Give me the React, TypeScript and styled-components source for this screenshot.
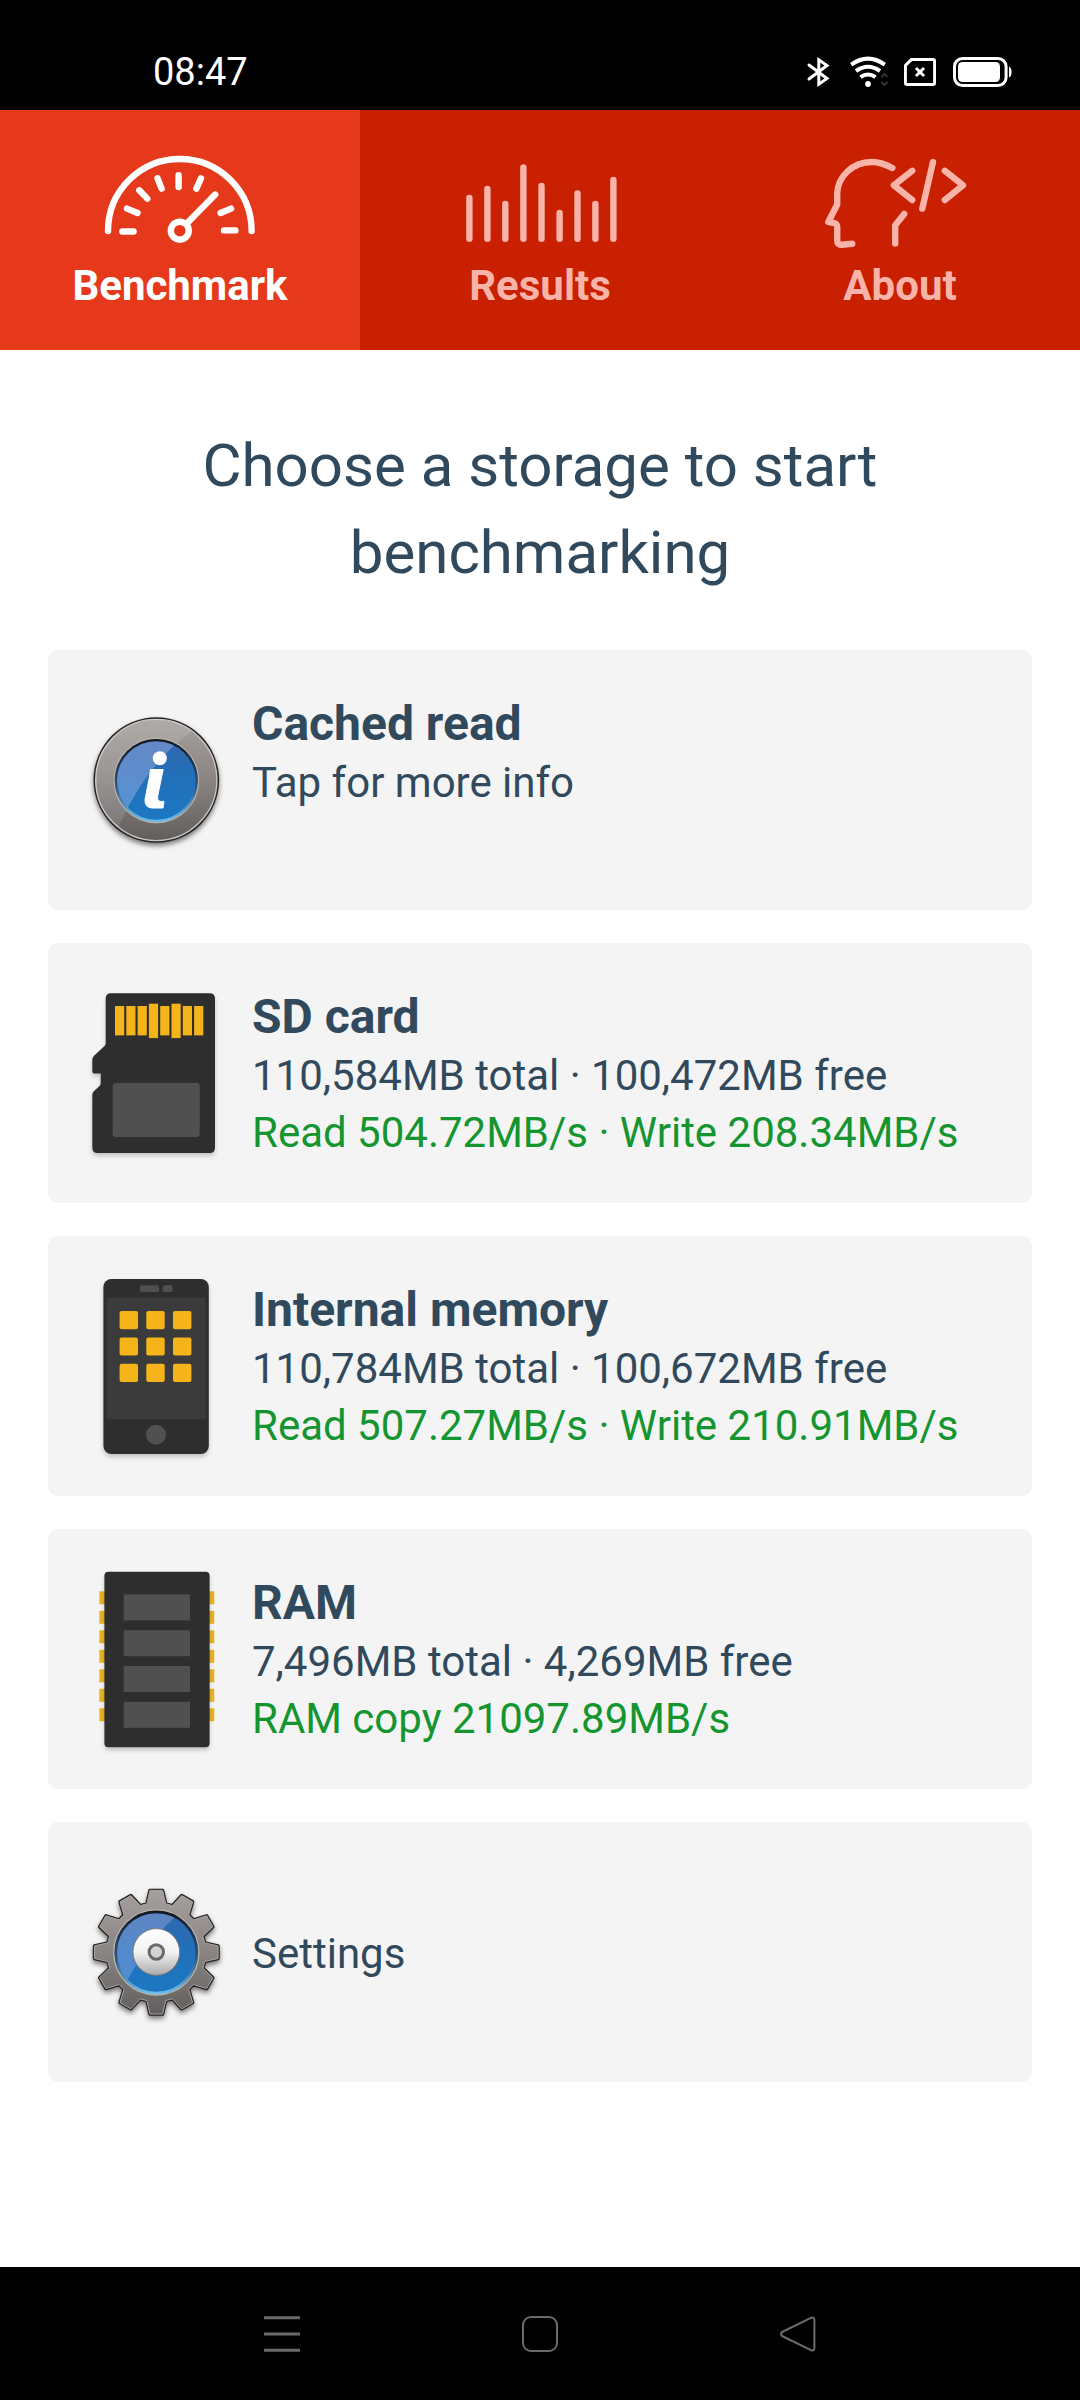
import React, { useState } from "react";
import styled, { createGlobalStyle } from "styled-components";

const GlobalStyle = createGlobalStyle`
  * { box-sizing: border-box; }
  body { margin: 0; background: #fff; font-family: Roboto, "Noto Sans", sans-serif; }
  button { border: 0; margin: 0; padding: 0; font: inherit; cursor: pointer; }
  svg { display: block; flex: none; }
`;

const Screen = styled.div`
  display: flex;
  flex-direction: column;
  min-height: 100vh;
  background: #fff;
  color: #31495c;
`;

const StatusBar = styled.header`
  display: flex;
  align-items: flex-end;
  justify-content: space-between;
  height: 110px;
  padding: 0 68px 16px 153px;
  background: #000;
  color: #fff;
`;

const Clock = styled.time`
  font-size: 38px;
  line-height: 44px;
`;

const StatusIcons = styled.div`
  display: flex;
  align-items: center;
  gap: 16px;
  height: 44px;
`;

const Tabs = styled.nav`
  display: grid;
  grid-template-columns: repeat(3, 1fr);
  background: #c82000;
`;

const Tab = styled.button<{ $active: boolean }>`
  display: flex;
  flex-direction: column;
  align-items: center;
  gap: 10px;
  height: 240px;
  padding-top: 40px;
  background: ${(p) => (p.$active ? "#e6391b" : "transparent")};
  color: ${(p) => (p.$active ? "#fff" : "#f8b4a8")};
`;

const TabLabel = styled.span`
  font-size: 42px;
  font-weight: 700;
  line-height: 52px;
`;

const Main = styled.main`
  flex: 1;
  padding: 72px 48px;
`;

const Heading = styled.h1`
  margin: 0 0 54px;
  font-size: 60px;
  font-weight: 400;
  line-height: 87px;
  text-align: center;
`;

const CardList = styled.div`
  display: flex;
  flex-direction: column;
  gap: 33px;
`;

const Card = styled.button`
  display: flex;
  align-items: center;
  gap: 24px;
  min-height: 260px;
  padding: 30px 36px;
  border-radius: 10px;
  background: #f4f4f4;
  color: inherit;
  text-align: left;
`;

const CardText = styled.span`
  display: flex;
  flex-direction: column;
  flex: 1;
  padding-top: 2px;
`;

const CardTitle = styled.strong`
  font-size: 48px;
  font-weight: 700;
  line-height: 60px;
`;

const CardLine = styled.span<{ $result?: boolean }>`
  min-height: 57px;
  font-size: 42px;
  line-height: 57px;
  color: ${(p) => (p.$result ? "#149530" : "inherit")};
`;

const NavBar = styled.footer`
  display: flex;
  align-items: center;
  justify-content: center;
  gap: 218px;
  height: 133px;
  background: #000;
`;

const NavButton = styled.button`
  display: grid;
  place-items: center;
  width: 40px;
  height: 40px;
  background: transparent;
  color: #6b6b6b;
`;

const BluetoothIcon = () => (
  <svg width="28" height="32" viewBox="0 0 28 32" fill="none" stroke="#fff" strokeWidth="3" strokeLinejoin="miter" strokeLinecap="round">
    <path d="M3 9 L21 22.5 L12.8 28.2 V3.8 L21 9.5 L3 23" />
  </svg>
);

const WifiIcon = () => (
  <svg width="38" height="32" viewBox="0 0 38 32" fill="none" stroke="#fff" strokeWidth="4">
    <path d="M1.2 8.6 Q18 -3.4 34.8 8.6" />
    <path d="M6 15 Q18 6.5 30 15" />
    <path d="M10.5 21.2 Q18 15.8 25.5 21.2" />
    <circle cx="18" cy="28" r="2.9" fill="#fff" stroke="none" />
    <path d="M31.5 21 L34.5 18 L37.5 21 M31.5 26 L34.5 29 L37.5 26" stroke="#333" strokeWidth="2" />
  </svg>
);

const SimIcon = () => (
  <svg width="32" height="32" viewBox="0 0 32 32" fill="none" stroke="#fff" strokeWidth="3" strokeLinejoin="round">
    <path d="M7.5 3.4 H29 Q30.6 3.4 30.6 5 V27 Q30.6 28.6 29 28.6 H3 Q1.4 28.6 1.4 27 V9.5 Z" />
    <path d="M12 12 L20 20 M20 12 L12 20" />
  </svg>
);

const BatteryIcon = () => (
  <svg width="60" height="32" viewBox="0 0 60 32">
    <rect x="2.5" y="2.5" width="51.6" height="27" rx="8" fill="none" stroke="#fff" strokeWidth="3" />
    <rect x="6" y="6" width="42" height="20" rx="4.5" fill="#fff" />
    <path d="M57 10.5 Q59.6 11.5 59.6 16 Q59.6 20.5 57 21.5 Z" fill="#fff" />
  </svg>
);

const tabStroke = {
  width: 160,
  height: 100,
  fill: "none",
  stroke: "currentColor",
  strokeWidth: 6.4,
  strokeLinecap: "round" as const,
  strokeLinejoin: "round" as const,
};

const GaugeIcon = () => (
  <svg {...tabStroke} viewBox="100 150 160 100">
    <path d="M108 231 A71.8 72 0 0 1 251.6 231" />
    <path d="M122.4 231.5 H133.6 M127 208.6 L137.5 213 M139.3 190.3 L147.3 198.6 M157.5 178.3 L161.6 188.6 M178.6 175.2 V187 M201 178.3 L196.4 188.6 M220.6 213 L231 208.6 M224 230.4 H235.4" />
    <path d="M215.2 194.6 L187 223.2" />
    <circle cx="179.8" cy="230.7" r="9" />
  </svg>
);

const BarsIcon = () => (
  <svg {...tabStroke} viewBox="460 150 160 100">
    <path d="M469.4 198 V238.8 M487.4 189 V238.8 M505.3 204 V238.8 M523.4 167.5 V238.8 M541.5 186 V238.8 M559.6 213 V238.8 M577.5 193.5 V238.8 M595.4 204 V238.8 M613.4 180 V238.8" />
  </svg>
);

const CoderIcon = () => (
  <svg {...tabStroke} viewBox="820 150 160 100">
    <path d="M892.3 168 C884 163.5 878 162 872 162 C852 162 838 177 837.2 193 V204.5 L828.3 222 C831 223 837.2 221.5 837.2 227 V240.5 Q837.2 245 841.5 244.8 L852.2 243.8" />
    <path d="M904.2 214 L895.2 225.3 V243.6" />
    <path d="M912.2 170.8 L893.8 185.3 L912.2 200" />
    <path d="M933 162 L922.3 208.6" />
    <path d="M944.8 170.8 L963 185.3 L944.8 200" />
  </svg>
);

const Gradients = ({ id }: { id: string }) => (
  <defs>
    <linearGradient id={`${id}-steel`} x1="0" y1="0" x2="0" y2="1">
      <stop offset="0" stopColor="#a5a09e" />
      <stop offset="0.5" stopColor="#8a8583" />
      <stop offset="1" stopColor="#605e5d" />
    </linearGradient>
    <linearGradient id={`${id}-blue`} x1="0" y1="0" x2="0" y2="1">
      <stop offset="0" stopColor="#3267ad" />
      <stop offset="0.45" stopColor="#2270b9" />
      <stop offset="1" stopColor="#1c78c3" />
    </linearGradient>
    <linearGradient id={`${id}-rim`} x1="0" y1="0" x2="0" y2="1">
      <stop offset="0" stopColor="#101822" />
      <stop offset="0.55" stopColor="#2c527f" />
      <stop offset="1" stopColor="#6fbdec" />
    </linearGradient>
    <linearGradient id={`${id}-silver`} x1="0" y1="0" x2="0" y2="1">
      <stop offset="0" stopColor="#ffffff" />
      <stop offset="0.5" stopColor="#f2f2f2" />
      <stop offset="1" stopColor="#a9a9a9" />
    </linearGradient>
    <filter id={`${id}-shadow`} x="-20%" y="-20%" width="140%" height="140%">
      <feDropShadow dx="0" dy="3" stdDeviation="2.5" floodColor="#000" floodOpacity="0.5" />
    </filter>
    <clipPath id={`${id}-disc`}>
      <circle cx="72.3" cy="100" r="61" />
    </clipPath>
    <clipPath id={`${id}-lens`}>
      <circle cx="72.3" cy="100.5" r="41" />
    </clipPath>
  </defs>
);

const GLOSS = "M107 52 Q62 84 34 148 L0 148 V0 H107 Z";

const InfoIcon = () => (
  <svg width="144" height="200" viewBox="0 0 144 200">
    <Gradients id="info" />
    <circle cx="72.3" cy="100" r="62.8" fill="#262423" filter="url(#info-shadow)" />
    <circle cx="72.3" cy="100" r="60.6" fill="url(#info-steel)" stroke="#c9c5c2" strokeWidth="1.4" />
    <path d={GLOSS} fill="#fff" opacity="0.12" clipPath="url(#info-disc)" />
    <circle cx="72.3" cy="100.5" r="42" fill="url(#info-blue)" stroke="#bdb3a4" strokeWidth="1.6" />
    <path d={GLOSS} fill="#e3d5ff" opacity="0.3" clipPath="url(#info-lens)" />
    <circle cx="72.3" cy="100.5" r="40.4" fill="none" stroke="url(#info-rim)" strokeWidth="2.4" />
    <circle cx="75.8" cy="78.3" r="7" fill="#fff" />
    <path
      d="M66.5 89.5 H79.2 L77.6 97 L73.6 116.5 Q73 120.8 76 121.4 L80 121.4 L79 128 H68 Q60.5 127.6 61 119.5 L65.6 96 Z"
      fill="#fff"
      stroke="#fff"
      strokeWidth="1"
      strokeLinejoin="round"
    />
  </svg>
);

// Twelve tapered teeth around a round body.
const gearPath = (() => {
  const cx = 72.3;
  const cy = 100.2;
  const points: string[] = [];
  for (let i = 0; i < 12; i++) {
    const a = (i * Math.PI) / 6;
    const corners = [
      [-9.4, -48.4],
      [-6.3, -61.8],
      [6.3, -61.8],
      [9.4, -48.4],
    ];
    for (const [x, y] of corners) {
      const px = cx + x * Math.cos(a) - y * Math.sin(a);
      const py = cy + x * Math.sin(a) + y * Math.cos(a);
      points.push(`${px.toFixed(2)} ${py.toFixed(2)}`);
    }
  }
  return `M${points.join(" L")} Z`;
})();

const GearIcon = () => (
  <svg width="144" height="200" viewBox="0 0 144 200">
    <Gradients id="gear" />
    <path d={gearPath} fill="#262423" stroke="#262423" strokeWidth="3.4" strokeLinejoin="round" filter="url(#gear-shadow)" />
    <path d={gearPath} fill="url(#gear-steel)" stroke="#aaa6a3" strokeWidth="1" strokeLinejoin="round" />
    <circle cx="72.3" cy="100.5" r="42.4" fill="url(#gear-blue)" stroke="#bdb3a4" strokeWidth="1.6" />
    <path d={GLOSS} fill="#e3d5ff" opacity="0.26" clipPath="url(#gear-lens)" />
    <circle cx="72.3" cy="100.5" r="40.6" fill="none" stroke="url(#gear-rim)" strokeWidth="2.6" />
    <circle cx="72.3" cy="100" r="23.4" fill="url(#gear-silver)" stroke="#75777c" strokeWidth="1" />
    <circle cx="72.3" cy="100" r="7.2" fill="#d4d4d4" stroke="#6a6a6a" strokeWidth="3" />
  </svg>
);

const FlatShadow = ({ id }: { id: string }) => (
  <filter id={id} x="-20%" y="-20%" width="140%" height="140%">
    <feDropShadow dx="0" dy="3" stdDeviation="2" floodColor="#000" floodOpacity="0.2" />
  </filter>
);

const SdCardIcon = () => (
  <svg width="144" height="200" viewBox="0 0 144 200">
    <FlatShadow id="sd-shadow" />
    <path
      d="M27 20.3 H125.7 Q131 20.3 131 25.5 V174.5 Q131 180 125.7 180 H13.5 Q8.3 180 8.3 174.5 V122 Q8.3 119.5 10 118 L15 113.5 Q16.7 112 16.7 110 V100.5 H10 Q8.3 100.5 8.3 98.5 V86.5 Q8.3 84.5 9.8 83 L20.5 73 Q21.7 72 21.7 70 V25.5 Q21.7 20.3 27 20.3 Z"
      fill="#2f2f2f"
      filter="url(#sd-shadow)"
    />
    {[0, 1, 2, 3, 4, 5, 6, 7].map((i) => {
      const tall = i === 3 || i === 5;
      return <rect key={i} x={31 + i * 11.3} y={tall ? 30.7 : 33} width="9.2" height={tall ? 34.4 : 29.4} fill="#f5b41a" />;
    })}
    <rect x="28.7" y="110" width="87" height="54" rx="3" fill="#505050" />
  </svg>
);

const PhoneIcon = () => (
  <svg width="144" height="200" viewBox="0 0 144 200">
    <FlatShadow id="phone-shadow" />
    <rect x="19.4" y="13" width="105.4" height="175" rx="8" fill="#2d2d2d" filter="url(#phone-shadow)" />
    <rect x="22.7" y="31.7" width="99" height="121.6" fill="#3b3b3b" />
    <rect x="55.7" y="19.3" width="19.4" height="6.8" rx="2.5" fill="#505050" />
    <rect x="78.7" y="19.3" width="10" height="6.8" rx="2.5" fill="#505050" />
    {[0, 1, 2].map((row) =>
      [0, 1, 2].map((col) => (
        <rect key={`${row}${col}`} x={35.6 + col * 26.7} y={45 + row * 26.4} width="18.4" height="18.2" rx="2" fill="#f5b41a" />
      ))
    )}
    <circle cx="72" cy="168.7" r="10" fill="#505050" />
  </svg>
);

const RamIcon = () => (
  <svg width="144" height="200" viewBox="0 0 144 200">
    <FlatShadow id="ram-shadow" />
    {[0, 1, 2, 3, 4, 5, 6].map((i) => (
      <rect key={i} x="15.3" y={32.3 + i * 19.5} width="115" height="13" fill="#e9b322" />
    ))}
    <rect x="20.4" y="12.8" width="105.2" height="175.4" rx="4" fill="#2f2f2f" filter="url(#ram-shadow)" />
    {[0, 1, 2, 3].map((i) => (
      <rect key={i} x="39.7" y={35.4 + i * 35.8} width="66.3" height="26" fill="#505050" />
    ))}
  </svg>
);

const tabs = [
  { label: "Benchmark", Icon: GaugeIcon },
  { label: "Results", Icon: BarsIcon },
  { label: "About", Icon: CoderIcon },
];

const targets = [
  { title: "Cached read", info: "Tap for more info", result: "", Icon: InfoIcon },
  {
    title: "SD card",
    info: "110,584MB total · 100,472MB free",
    result: "Read 504.72MB/s · Write 208.34MB/s",
    Icon: SdCardIcon,
  },
  {
    title: "Internal memory",
    info: "110,784MB total · 100,672MB free",
    result: "Read 507.27MB/s · Write 210.91MB/s",
    Icon: PhoneIcon,
  },
  { title: "RAM", info: "7,496MB total · 4,269MB free", result: "RAM copy 21097.89MB/s", Icon: RamIcon },
];

export default function App() {
  const [active, setActive] = useState("Benchmark");
  return (
    <Screen>
      <GlobalStyle />
      <StatusBar>
        <Clock>08:47</Clock>
        <StatusIcons>
          <BluetoothIcon />
          <WifiIcon />
          <SimIcon />
          <BatteryIcon />
        </StatusIcons>
      </StatusBar>
      <Tabs>
        {tabs.map(({ label, Icon }) => (
          <Tab key={label} $active={label === active} aria-pressed={label === active} onClick={() => setActive(label)}>
            <Icon />
            <TabLabel>{label}</TabLabel>
          </Tab>
        ))}
      </Tabs>
      <Main>
        <Heading>Choose a storage to start benchmarking</Heading>
        <CardList>
          {targets.map(({ title, info, result, Icon }) => (
            <Card key={title}>
              <Icon />
              <CardText>
                <CardTitle>{title}</CardTitle>
                <CardLine>{info}</CardLine>
                <CardLine $result>{result}</CardLine>
              </CardText>
            </Card>
          ))}
          <Card>
            <GearIcon />
            <CardText>
              <CardLine>Settings</CardLine>
            </CardText>
          </Card>
        </CardList>
      </Main>
      <NavBar>
        <NavButton aria-label="Recent apps">
          <svg width="36" height="36" viewBox="0 0 36 36" stroke="currentColor" strokeWidth="3">
            <path d="M0 1.7 H36 M0 18 H36 M0 34.3 H36" />
          </svg>
        </NavButton>
        <NavButton aria-label="Home">
          <svg width="36" height="36" viewBox="0 0 36 36" fill="none" stroke="currentColor" strokeWidth="2">
            <rect x="1" y="1" width="34" height="34" rx="8" />
          </svg>
        </NavButton>
        <NavButton aria-label="Back">
          <svg width="36" height="36" viewBox="0 0 36 36" fill="none" stroke="currentColor" strokeWidth="2" strokeLinejoin="round">
            <path d="M2 16 L31 1.8 Q34.4 0.6 34.4 4 V32 Q34.4 35.4 31 34.2 L2 20 Q0 18 2 16 Z" />
          </svg>
        </NavButton>
      </NavBar>
    </Screen>
  );
}
